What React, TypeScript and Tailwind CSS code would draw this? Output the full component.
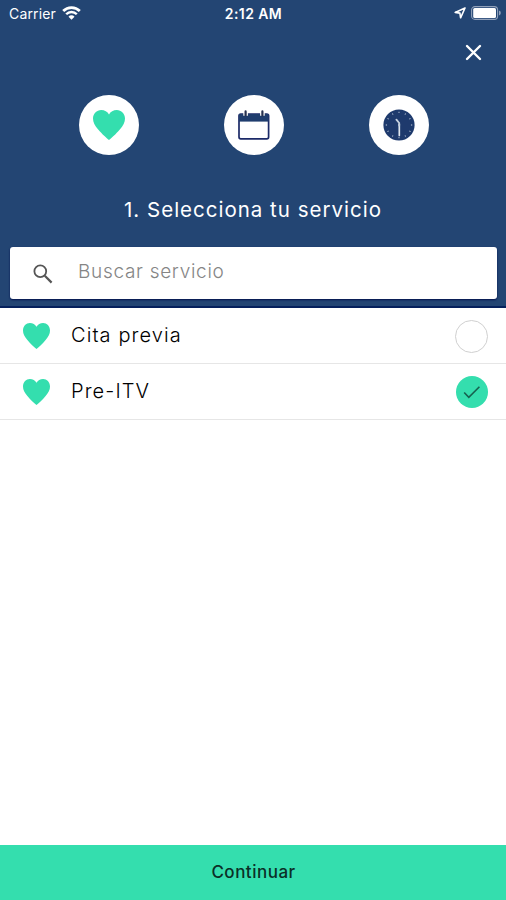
import React from "react";

const HeartIcon = ({ className }: { className?: string }): JSX.Element => (
  <svg viewBox="0 0 32 30" className={className} fill="#34deae" preserveAspectRatio="none">
    <path d="M16 30C13.6 28.2 9.2 24.3 5.2 19.6C1.8 15.6 0 12.4 0 8.6C0 3.6 3.7 0 8.2 0C11.6 0 14.5 1.7 16 4.4C17.5 1.7 20.4 0 23.8 0C28.3 0 32 3.6 32 8.6C32 12.4 30.2 15.6 26.8 19.6C22.8 24.3 18.4 28.2 16 30Z" />
  </svg>
);

const CalendarIcon = (): JSX.Element => (
  <svg viewBox="0 0 34 32" className="h-8 w-[34px]" fill="none">
    <rect x="2" y="5" width="29.6" height="24.8" rx="1.8" stroke="#1c2a68" strokeWidth="1.7" />
    <path d="M2 5h29.6v7.6H2z" fill="#1f3d6e" />
    <path d="M8.6 1v5.8M25.4 1v5.8" stroke="#fff" strokeWidth="4.6" />
    <path d="M8.6 2.4v4M25.4 2.4v4" stroke="#26304f" strokeWidth="2.2" strokeLinecap="round" />
  </svg>
);

const ClockIcon = (): JSX.Element => (
  <svg viewBox="0 0 32 32" className="h-8 w-8" fill="none">
    <circle cx="16" cy="16" r="15.6" fill="#1e3a6d" />
    <circle
      cx="16"
      cy="16"
      r="12.6"
      stroke="#c3cddc"
      strokeWidth="1.3"
      pathLength="120"
      strokeDasharray="1.4 8.6"
      strokeDashoffset="0.7"
    />
    <path d="M16.3 15v11.5" stroke="#dfe6ef" strokeWidth="1.7" strokeLinecap="round" />
    <path d="M16.2 16.5V14L13.4 10.6" stroke="#c4cfde" strokeWidth="1.8" strokeLinecap="round" />
  </svg>
);

const StatusBar = (): JSX.Element => (
  <div className="grid h-[27px] grid-cols-3 items-center font-['Inter',sans-serif] text-white">
    <div className="flex items-center gap-[6px] pl-[9px]">
      <span className="text-[14px] leading-[27px] tracking-[0.15px]">Carrier</span>
      <svg viewBox="0 0 19 14" className="-mt-[2px] h-[14px] w-[19px]" fill="none" stroke="#fff">
        <path d="M1.2 5.1A11.8 11.8 0 0 1 17.8 5.1" strokeWidth="2.8" />
        <path d="M4.2 8.3A7.2 7.2 0 0 1 14.8 8.3" strokeWidth="2.4" />
        <path d="M9.5 13.8L6.5 10.7A4 4 0 0 1 12.5 10.7Z" fill="#fff" stroke="none" />
      </svg>
    </div>
    <span className="pl-px text-center text-[14px] leading-[27px] font-semibold tracking-[0.4px]">2:12 AM</span>
    <div className="flex items-center justify-end gap-[5px] pr-[5px]">
      <svg viewBox="0 0 12 12" className="-mt-px h-3 w-3" fill="none">
        <path d="M11 1L1.2 5.4L5.9 6.1L6.6 10.8Z" stroke="#fff" strokeWidth="1.6" strokeLinejoin="round" />
      </svg>
      <svg viewBox="0 0 30 14" className="-mt-[2px] h-[14px] w-[30px]" fill="none">
        <rect x="0.6" y="0.6" width="26" height="12.8" rx="3.4" stroke="#91a1ba" strokeWidth="1.1" />
        <rect x="2.2" y="2" width="22.8" height="10" rx="1.5" fill="#fff" />
        <path d="M28 4.6a2.5 2.5 0 0 1 0 4.8z" fill="#91a1ba" />
      </svg>
    </div>
  </div>
);

const services = [
  { name: "Cita previa", selected: false },
  { name: "Pre-ITV", selected: true },
];

const App = (): JSX.Element => {
  return (
    <main className="flex h-[900px] w-[506px] flex-col overflow-hidden bg-white font-['Inter',sans-serif]">
      <header className="flex h-[308px] flex-col border-b-2 border-[#05205c] bg-[#234573]">
        <StatusBar />
        <div className="flex h-[50px] items-center justify-end pr-[24px]">
          <button aria-label="Cerrar">
            <svg viewBox="0 0 17 17" className="h-[17px] w-[17px]" stroke="#fff" strokeWidth="2.4" strokeLinecap="round">
              <path d="M2 2L15 15M15 2L2 15" />
            </svg>
          </button>
        </div>

        <div className="mt-[18px] flex justify-between pr-[77.5px] pl-[78.5px]">
          <div className="flex h-[60px] w-[60px] items-center justify-center rounded-full bg-white">
            <HeartIcon className="h-[30px] w-8" />
          </div>
          <div className="flex h-[60px] w-[60px] items-center justify-center rounded-full bg-white">
            <CalendarIcon />
          </div>
          <div className="flex h-[60px] w-[60px] items-center justify-center rounded-full bg-white">
            <ClockIcon />
          </div>
        </div>

        <h1 className="mt-[40px] text-center text-[20.5px] leading-[30px] font-normal tracking-[1px] text-white">
          1. Selecciona tu servicio
        </h1>

        <div className="mr-[9px] ml-[10px] mt-[22px] flex h-[52px] items-center rounded-[3px] bg-white pl-[23px] shadow-[0_1px_2px_#02114d]">
          <svg viewBox="0 0 20 20" className="mt-[2px] h-5 w-5" fill="none" stroke="#555">
            <circle cx="7.3" cy="7.3" r="5.9" strokeWidth="1.8" />
            <path d="M11.8 11.8L18.6 18.6" strokeWidth="2.2" />
          </svg>
          <span className="-mt-px ml-[25px] text-[19px] font-light tracking-[0.7px] text-[#858585]">
            Buscar servicio
          </span>
        </div>
      </header>

      <ul>
        {services.map((service) => (
          <li
            key={service.name}
            className="flex h-14 items-center border-b border-[#e6e6e6] pr-[18px] pl-[23px]"
          >
            <HeartIcon className="h-[26px] w-[27px]" />
            <span className="-mt-px ml-[21px] flex-1 text-[20px] font-light tracking-[1.1px] text-black">
              {service.name}
            </span>
            {service.selected ? (
              <div className="mt-px flex h-8 w-8 items-center justify-center rounded-full bg-[#34deae]">
                <svg viewBox="0 0 18 14" className="h-[14px] w-[18px]" fill="none" stroke="#17614f" strokeWidth="1.6">
                  <path d="M1.2 7.5L5.8 12.3L16.4 1.8" />
                </svg>
              </div>
            ) : (
              <div className="mt-[2px] h-[33px] w-[33px] rounded-full border-[1.5px] border-[#d0d0d0]" />
            )}
          </li>
        ))}
      </ul>

      <button className="mt-auto h-[55px] w-full bg-[#34deae] pl-px text-[17px] font-medium tracking-[0.5px] text-[#0b2f27]">
        Continuar
      </button>
    </main>
  );
};

export default App;
